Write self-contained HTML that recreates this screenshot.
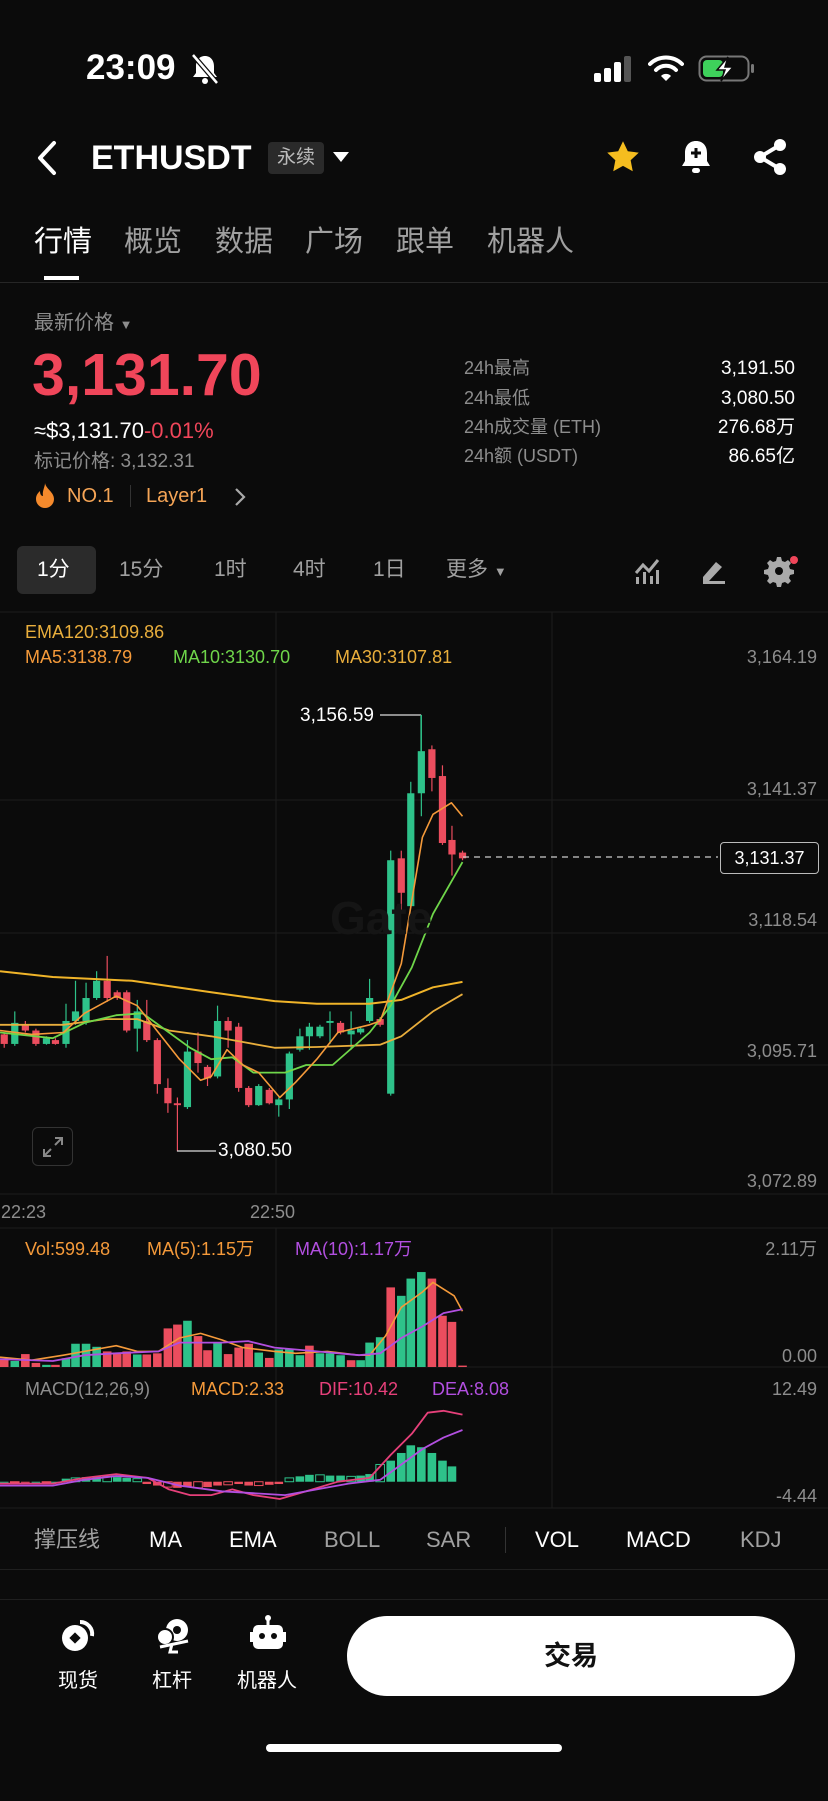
<!DOCTYPE html>
<html><head><meta charset="utf-8">
<style>
*{margin:0;padding:0;box-sizing:border-box}
body{width:828px;height:1801px;background:#0b0b0b;color:#fff;font-family:"Liberation Sans","Noto Sans CJK SC",sans-serif;position:relative;overflow:hidden}
.a{position:absolute;white-space:nowrap;line-height:1}
.g{color:#8d8d8d}
svg{position:absolute;left:0;top:0}
</style></head><body>
<svg id="s" width="828" height="1801" viewBox="0 0 828 1801"></svg>

<!-- status bar -->
<div class="a" style="left:86px;top:50px;font-size:35px;font-weight:bold">23:09</div>
<svg style="left:190px;top:52px" width="30" height="34" viewBox="0 0 30 34"><path d="M15 4c-6 0-9 5-9 10v7l-3 4h24l-3-4v-7c0-5-3-10-9-10z" fill="#fff"/><circle cx="15" cy="29" r="3" fill="#fff"/><path d="M3 3L27 31" stroke="#0b0b0b" stroke-width="5"/><path d="M3 3L27 31" stroke="#fff" stroke-width="2.5"/></svg>
<svg style="left:592px;top:56px" width="44" height="26"><rect x="2" y="17" width="7" height="9" rx="2" fill="#fff"/><rect x="12" y="12" width="7" height="14" rx="2" fill="#fff"/><rect x="22" y="6" width="7" height="20" rx="2" fill="#fff"/><rect x="32" y="0" width="7" height="26" rx="2" fill="#555"/></svg>
<svg style="left:648px;top:54px" width="36" height="28" viewBox="0 0 36 28"><path d="M2 10a23 23 0 0 1 32 0" stroke="#fff" stroke-width="4" fill="none" stroke-linecap="round"/><path d="M8 16a14 14 0 0 1 20 0" stroke="#fff" stroke-width="4" fill="none" stroke-linecap="round"/><path d="M13 22l5 5 5-5a7 7 0 0 0-10 0z" fill="#fff"/></svg>
<svg style="left:698px;top:55px" width="58" height="28"><rect x="1.5" y="1.5" width="49" height="24" rx="7" stroke="#777" stroke-width="2" fill="none"/><rect x="5" y="5" width="20" height="17" rx="4" fill="#3ed15b"/><rect x="53" y="9" width="3" height="9" rx="1.5" fill="#777"/><path d="M30 2L19 15h8l-4 11 12-14h-8z" fill="#fff" stroke="#0b0b0b" stroke-width="1.5"/></svg>

<!-- header -->
<svg style="left:34px;top:140px" width="26" height="36"><path d="M20 3L6 18l14 15" stroke="#fff" stroke-width="4" fill="none" stroke-linecap="round" stroke-linejoin="round"/></svg>
<div class="a" style="left:91px;top:141px;font-size:34px;font-weight:bold">ETHUSDT</div>
<div class="a" style="left:268px;top:142px;width:56px;height:32px;background:#2a2a2a;border-radius:4px;font-size:19px;color:#bbb;text-align:center;line-height:32px">永续</div>
<svg style="left:332px;top:150px" width="18" height="14"><path d="M1 2h16L9 12z" fill="#fff"/></svg>
<svg style="left:604px;top:139px" width="38" height="36" viewBox="0 0 24 24"><path d="M12 1.5l3.2 6.7 7.3.9-5.4 5.1 1.4 7.3L12 17.9l-6.5 3.6 1.4-7.3L1.5 9.1l7.3-.9z" fill="#f5bd1f"/></svg>
<svg style="left:680px;top:138px" width="32" height="40" viewBox="0 0 32 40"><path d="M16 3c-7 0-11 5-11 12v8l-3 5h28l-3-5v-8c0-7-4-12-11-12z" fill="#fff"/><rect x="12" y="30" width="8" height="5" rx="2.5" fill="#fff"/><path d="M16 10v10M11 15h10" stroke="#0b0b0b" stroke-width="3"/></svg>
<svg style="left:752px;top:138px" width="36" height="38" viewBox="0 0 36 38"><circle cx="28" cy="7" r="6" fill="#fff"/><circle cx="8" cy="19" r="6" fill="#fff"/><circle cx="28" cy="31" r="6" fill="#fff"/><path d="M28 7L8 19l20 12" stroke="#fff" stroke-width="4" fill="none"/></svg>

<!-- tabs -->
<div class="a" style="left:34px;top:228px;font-size:29px">行情</div>
<div class="a g" style="left:124px;top:228px;font-size:29px;color:#a0a0a0">概览</div>
<div class="a" style="left:215px;top:228px;font-size:29px;color:#a0a0a0">数据</div>
<div class="a" style="left:305px;top:228px;font-size:29px;color:#a0a0a0">广场</div>
<div class="a" style="left:396px;top:228px;font-size:29px;color:#a0a0a0">跟单</div>
<div class="a" style="left:487px;top:228px;font-size:29px;color:#a0a0a0">机器人</div>
<div class="a" style="left:44px;top:276px;width:35px;height:4px;background:#fff"></div>
<div class="a" style="left:0;top:282px;width:828px;height:1px;background:#262626"></div>

<!-- price area -->
<div class="a g" style="left:34px;top:313px;font-size:20px">最新价格 <span style="font-size:13px">▼</span></div>
<div class="a" style="left:32px;top:346px;font-size:59px;font-weight:bold;color:#f0465a">3,131.70</div>
<div class="a" style="left:34px;top:420px;font-size:22px">≈$3,131.70<span style="color:#f0465a">-0.01%</span></div>
<div class="a g" style="left:34px;top:452px;font-size:19px">标记价格: 3,132.31</div>
<svg style="left:34px;top:482px" width="22" height="26" viewBox="0 0 22 26"><path d="M11 1c1 6 9 9 9 16a9 9 0 0 1-18 0c0-4 2-6 4-8 0 3 1 5 3 5-1-5 2-9 2-13z" fill="#f58a2c"/></svg>
<div class="a" style="left:67px;top:486px;font-size:20px;color:#f6a556">NO.1</div>
<div class="a" style="left:130px;top:485px;width:1px;height:22px;background:#333"></div>
<div class="a" style="left:146px;top:486px;font-size:20px;color:#f6a556">Layer1</div>
<svg style="left:233px;top:487px" width="14" height="20"><path d="M3 2l8 8-8 8" stroke="#aaa" stroke-width="2.2" fill="none"/></svg>

<div class="a g" style="left:464px;top:359px;font-size:18px">24h最高</div>
<div class="a g" style="left:464px;top:389px;font-size:18px">24h最低</div>
<div class="a g" style="left:464px;top:418px;font-size:18px">24h成交量 (ETH)</div>
<div class="a g" style="left:464px;top:447px;font-size:18px">24h额 (USDT)</div>
<div class="a" style="right:33px;top:359px;font-size:19px">3,191.50</div>
<div class="a" style="right:33px;top:389px;font-size:19px">3,080.50</div>
<div class="a" style="right:33px;top:418px;font-size:19px">276.68万</div>
<div class="a" style="right:33px;top:447px;font-size:19px">86.65亿</div>

<!-- timeframe -->
<div class="a" style="left:17px;top:546px;width:79px;height:48px;background:#2b2b2b;border-radius:6px"></div>
<div class="a" style="left:37px;top:559px;font-size:21px">1分</div>
<div class="a" style="left:119px;top:559px;font-size:21px;color:#a0a0a0">15分</div>
<div class="a" style="left:214px;top:559px;font-size:21px;color:#a0a0a0">1时</div>
<div class="a" style="left:293px;top:559px;font-size:21px;color:#a0a0a0">4时</div>
<div class="a" style="left:373px;top:559px;font-size:21px;color:#a0a0a0">1日</div>
<div class="a" style="left:446px;top:559px;font-size:21px;color:#a0a0a0">更多 <span style="font-size:13px">▼</span></div>
<svg style="left:633px;top:557px" width="28" height="28" viewBox="0 0 28 28"><path d="M3 16l7-8 6 6 9-11" stroke="#aaa" stroke-width="3" fill="none"/><rect x="3" y="20" width="3" height="7" fill="#aaa"/><rect x="10" y="15" width="3" height="12" fill="#aaa"/><rect x="17" y="19" width="3" height="8" fill="#aaa"/><rect x="23" y="13" width="3" height="14" fill="#aaa"/></svg>
<svg style="left:699px;top:557px" width="28" height="28" viewBox="0 0 28 28"><path d="M4 20L17 5l6 5-13 14H4z" fill="#aaa"/><rect x="4" y="24" width="22" height="3" fill="#aaa"/></svg>
<svg style="left:764px;top:555px" width="34" height="32" viewBox="0 0 34 32"><path d="M14 3h4l1 4 3 1 3-2 3 3-2 3 1 3 4 1v4l-4 1-1 3 2 3-3 3-3-2-3 1-1 4h-4l-1-4-3-1-3 2-3-3 2-3-1-3-4-1v-4l4-1 1-3-2-3 3-3 3 2 3-1z" fill="#aaa" transform="translate(-1 -1)"/><circle cx="15" cy="16" r="4" fill="#0b0b0b"/><circle cx="30" cy="5" r="4" fill="#f0465a"/></svg>

<!-- chart texts -->
<div class="a" style="left:25px;top:623px;font-size:18px;color:#e9ae3c">EMA120:3109.86</div>
<div class="a" style="left:25px;top:648px;font-size:18px;color:#f59a3a">MA5:3138.79</div>
<div class="a" style="left:173px;top:648px;font-size:18px;color:#6fd64a">MA10:3130.70</div>
<div class="a" style="left:335px;top:648px;font-size:18px;color:#e9ae3c">MA30:3107.81</div>
<div class="a g" style="right:11px;top:648px;font-size:18px">3,164.19</div>
<div class="a g" style="right:11px;top:780px;font-size:18px">3,141.37</div>
<div class="a g" style="right:11px;top:911px;font-size:18px">3,118.54</div>
<div class="a g" style="right:11px;top:1042px;font-size:18px">3,095.71</div>
<div class="a g" style="right:11px;top:1172px;font-size:18px">3,072.89</div>
<div class="a" style="left:720px;top:842px;width:99px;height:32px;border:1px solid #bbb;border-radius:4px;background:#0b0b0b;font-size:18px;text-align:center;line-height:30px">3,131.37</div>
<div class="a" style="left:330px;top:895px;font-size:46px;font-weight:bold;color:#151515">Gate</div>
<div class="a" style="left:300px;top:706px;font-size:19px">3,156.59</div>
<div class="a" style="left:218px;top:1141px;font-size:19px">3,080.50</div>
<div class="a" style="left:32px;top:1127px;width:41px;height:39px;border:1.5px solid #333;border-radius:6px"></div>
<svg style="left:42px;top:1136px" width="22" height="22"><path d="M13 2h7v7M20 2l-7 7M9 20H2v-7M2 20l7-7" stroke="#888" stroke-width="2" fill="none"/></svg>
<div class="a g" style="left:1px;top:1203px;font-size:18px">22:23</div>
<div class="a g" style="left:250px;top:1203px;font-size:18px">22:50</div>

<div class="a" style="left:25px;top:1240px;font-size:18px;color:#f59a3a">Vol:599.48</div>
<div class="a" style="left:147px;top:1240px;font-size:18px;color:#f59a3a">MA(5):1.15万</div>
<div class="a" style="left:295px;top:1240px;font-size:18px;color:#b24fe0">MA(10):1.17万</div>
<div class="a g" style="right:11px;top:1240px;font-size:18px">2.11万</div>
<div class="a g" style="right:11px;top:1347px;font-size:18px">0.00</div>
<div class="a g" style="left:25px;top:1380px;font-size:18px">MACD(12,26,9)</div>
<div class="a" style="left:191px;top:1380px;font-size:18px;color:#f59a3a">MACD:2.33</div>
<div class="a" style="left:319px;top:1380px;font-size:18px;color:#e6407a">DIF:10.42</div>
<div class="a" style="left:432px;top:1380px;font-size:18px;color:#b24fe0">DEA:8.08</div>
<div class="a g" style="right:11px;top:1380px;font-size:18px">12.49</div>
<div class="a g" style="right:11px;top:1487px;font-size:18px">-4.44</div>

<!-- indicator row -->
<div class="a" style="left:34px;top:1529px;font-size:22px;color:#a0a0a0">撑压线</div>
<div class="a" style="left:149px;top:1529px;font-size:22px">MA</div>
<div class="a" style="left:229px;top:1529px;font-size:22px">EMA</div>
<div class="a" style="left:324px;top:1529px;font-size:22px;color:#a0a0a0">BOLL</div>
<div class="a" style="left:426px;top:1529px;font-size:22px;color:#a0a0a0">SAR</div>
<div class="a" style="left:505px;top:1527px;width:1px;height:26px;background:#333"></div>
<div class="a" style="left:535px;top:1529px;font-size:22px">VOL</div>
<div class="a" style="left:626px;top:1529px;font-size:22px">MACD</div>
<div class="a" style="left:740px;top:1529px;font-size:22px;color:#a0a0a0">KDJ</div>
<div class="a" style="left:0;top:1569px;width:828px;height:1px;background:#1f1f1f"></div>
<div class="a" style="left:0;top:1599px;width:828px;height:1px;background:#1f1f1f"></div>

<!-- bottom nav -->
<svg style="left:60px;top:1618px" width="36" height="36" viewBox="0 0 36 36"><circle cx="15" cy="20" r="13" fill="#fff"/><rect x="11" y="16" width="8" height="8" transform="rotate(45 15 20)" fill="#0b0b0b"/><path d="M20 4a12 12 0 0 1 12 14" stroke="#fff" stroke-width="4" fill="none"/></svg>
<div class="a" style="left:58px;top:1671px;font-size:20px">现货</div>
<svg style="left:154px;top:1617px" width="38" height="38" viewBox="0 0 38 38"><circle cx="23" cy="13" r="11" fill="#fff"/><circle cx="23" cy="13" r="4" fill="#0b0b0b"/><circle cx="11" cy="20" r="8" fill="#fff" stroke="#0b0b0b" stroke-width="2"/><path d="M6 30l28-6M18 27l-2 8h8" stroke="#fff" stroke-width="3" fill="none"/></svg>
<div class="a" style="left:152px;top:1671px;font-size:20px">杠杆</div>
<svg style="left:249px;top:1614px" width="38" height="40" viewBox="0 0 38 40"><circle cx="19" cy="4" r="3" fill="#fff"/><rect x="17.5" y="5" width="3" height="6" fill="#fff"/><rect x="4" y="11" width="30" height="24" rx="5" fill="#fff"/><rect x="1" y="18" width="3" height="10" fill="#fff"/><rect x="34" y="18" width="3" height="10" fill="#fff"/><circle cx="13" cy="22" r="3" fill="#0b0b0b"/><circle cx="25" cy="22" r="3" fill="#0b0b0b"/></svg>
<div class="a" style="left:237px;top:1671px;font-size:20px">机器人</div>
<div class="a" style="left:347px;top:1616px;width:448px;height:80px;background:#fff;border-radius:40px;color:#111;font-size:27px;font-weight:bold;text-align:center;line-height:80px">交易</div>
<div class="a" style="left:266px;top:1744px;width:296px;height:8px;background:#fff;border-radius:4px"></div>

<script>
(function(){
var s=document.getElementById('s'),h='';
function L(x1,y1,x2,y2,c,w,d){h+='<line x1="'+x1+'" y1="'+y1+'" x2="'+x2+'" y2="'+y2+'" stroke="'+c+'" stroke-width="'+(w||1)+'"'+(d?' stroke-dasharray="'+d+'"':'')+'/>';}
function R(x,y,w,hh,c,hol){h+='<rect x="'+x+'" y="'+y+'" width="'+w+'" height="'+Math.max(hh,1)+'" '+(hol?'fill="none" stroke="'+c+'" stroke-width="1"':'fill="'+c+'"')+'/>';}
function P(pts,c,w,fx,fy){h+='<polyline fill="none" stroke="'+c+'" stroke-width="'+w+'" stroke-linejoin="round" points="'+pts.map(function(p){return fx(p[0]).toFixed(1)+','+fy(p[1]).toFixed(1)}).join(' ')+'"/>';}
var X=function(x){return x*0.528},Y2=function(y){return 600+y*0.3827},Y3=function(y){return 1200+y*0.3833};
var G='#2ec28a',Rd='#eb4d5e',grid='#1d1d1d';
L(0,612,828,612,grid);L(0,800,828,800,grid);L(0,933,828,933,grid);L(0,1065,828,1065,grid);L(0,1194,828,1194,grid);
L(276,612,276,1194,grid);L(552,612,552,1194,grid);
L(0,1228,828,1228,grid);L(0,1367,828,1367,grid);L(0,1508,828,1508,grid);
L(276,1228,276,1508,grid);L(552,1228,552,1508,grid);
var C=[[8,1135,1160,1130,1170,'r'],[28,1105,1160,1075,1165,'g'],[48,1108,1125,1100,1130,'r'],[68,1125,1160,1120,1165,'r'],[88,1145,1160,1140,1162,'g'],[105,1150,1160,1145,1162,'r'],[125,1100,1160,1055,1170,'g'],[143,1075,1100,995,1110,'g'],[163,1040,1100,1000,1110,'g'],[183,995,1040,970,1045,'g'],[203,995,1040,930,1050,'r'],[222,1025,1040,1020,1045,'r'],[240,1025,1125,1020,1130,'r'],[260,1075,1120,1045,1180,'g'],[278,1100,1150,1045,1155,'r'],[298,1150,1265,1145,1290,'r'],[318,1275,1315,1250,1340,'r'],[336,1315,1320,1300,1440,'r'],[355,1180,1325,1150,1330,'g'],[375,1180,1210,1130,1235,'r'],[393,1220,1250,1215,1270,'r'],[412,1100,1245,1060,1250,'g'],[432,1100,1125,1090,1170,'r'],[452,1115,1275,1105,1285,'r'],[471,1275,1320,1270,1325,'r'],[490,1270,1320,1265,1322,'g'],[510,1280,1315,1275,1318,'r'],[528,1305,1320,1300,1350,'g'],[548,1185,1305,1180,1330,'g'],[568,1140,1175,1120,1180,'g'],[586,1115,1140,1105,1175,'g'],[606,1115,1140,1110,1145,'g'],[625,1100,1105,1075,1160,'g'],[645,1105,1130,1100,1135,'r'],[665,1125,1135,1075,1175,'g'],[683,1120,1130,1115,1135,'g'],[700,1040,1100,990,1105,'g'],[720,1095,1110,1090,1115,'r'],[740,680,1290,655,1295,'g'],[760,675,765,655,810,'r'],[778,505,800,475,805,'g'],[798,395,505,300,565,'g'],[818,390,465,380,500,'r'],[838,460,635,432,640,'r'],[856,627,665,590,720,'r'],[876,660,675,655,680,'r']];
C.forEach(function(c){var x=X(c[0]),col=c[5]=='g'?G:Rd;L(x,Y2(c[3]),x,Y2(c[4]),col,1.2);R(x-3.6,Y2(c[1]),7.2,Y2(c[2])-Y2(c[1]),col);});
L(380,715,421,715,'#ddd',1.2);L(421,715,421,Y2(395),G,1.2);
L(177,Y2(1440),177,1151,'#ddd',1.2);L(177,1151,216,1151,'#ddd',1.2);
L(463,857,718,857,'#ccc',1.3,'6 5');
P([[0,970],[100,985],[250,995],[400,1025],[520,1048],[600,1055],[700,1055],[760,1045],[820,1012],[876,998]],'#f0b429',2,X,Y2);
P([[0,1110],[120,1110],[200,1095],[260,1095],[320,1125],[400,1140],[460,1155],[520,1170],[600,1168],[720,1162],[760,1140],[820,1075],[876,1030]],'#e9ae3c',1.8,X,Y2);
P([[0,1130],[100,1145],[160,1105],[220,1085],[270,1080],[320,1130],[360,1170],[400,1200],[440,1195],[480,1235],[540,1235],[580,1215],[630,1215],[700,1130],[740,1060],[780,960],[820,820],[876,685]],'#6fd64a',1.8,X,Y2);
P([[0,1125],[60,1135],[120,1130],[160,1080],[220,1035],[260,1060],[300,1130],[340,1200],[380,1255],[400,1245],[430,1175],[460,1215],[490,1235],[530,1300],[560,1260],[600,1200],[640,1130],[700,1110],[720,1100],[760,950],[800,620],[820,560],[855,530],[876,565]],'#f59a3a',1.6,X,Y2);
var V=[415,420,402,425,430,430,413,375,375,383,395,398,395,403,403,400,335,325,315,355,392,372,402,385,375,398,412,390,390,405,380,400,400,405,418,418,372,358,228,250,205,188,205,302,318,432];
var VX=[8,28,48,68,88,105,125,143,163,183,203,222,240,260,278,298,318,336,355,375,393,412,432,452,471,490,510,528,548,568,586,606,625,645,665,683,700,720,740,760,778,798,818,838,856,876];
var vcol='rgrrgrgggg'+'rrrgrrrrgrr'+'grrrgrgggrgggrgg'+'grggg'+'rrrr';
VX.forEach(function(x,i){var col=(vcol[i]=='g')?G:Rd;var t=Y3(V[i]);R(X(x)-4.3,t,8.6,1367-t,col);});
P([[0,410],[60,418],[120,405],[160,395],[220,380],[260,395],[300,395],[340,360],[380,348],[420,365],[460,385],[520,395],[560,400],[620,395],[680,405],[700,405],[730,355],[760,280],[800,240],[820,215],[860,250],[876,290]],'#f59a3a',1.6,X,Y3);
P([[0,415],[100,420],[160,405],[220,400],[300,395],[340,372],[420,372],[470,368],[520,385],[600,395],[680,405],[720,400],[760,360],[800,330],[840,295],[876,285]],'#b24fe0',1.8,X,Y3);
var Z=735,MH=[0,-2,-2,0,-2,0,8,10,12,14,14,12,10,8,-6,-10,-14,-16,-14,-16,-14,-10,-8,-6,-10,-10,-8,-6,10,14,18,18,16,16,14,16,20,45,55,75,95,90,75,55,40];
VX.forEach(function(x,i){if(i>=MH.length)return;var v=MH[i];var col=v>=0?G:Rd;var hol=(i%3==1)&&i<40;if(v>=0)R(X(x)-4.3,Y3(Z-v),8.6,Y3(Z)-Y3(Z-v),col,hol);else R(X(x)-4.3,Y3(Z),8.6,Y3(Z-v)-Y3(Z),col,hol);});
P([[0,740],[100,740],[160,725],[220,715],[280,725],[320,755],[360,770],[400,770],[440,755],[480,770],[530,780],[580,760],[640,735],[700,725],[740,665],[780,610],[810,555],[840,550],[876,560]],'#e6407a',1.8,X,Y3);
P([[0,745],[100,745],[160,730],[220,720],[280,725],[340,745],[420,760],[480,765],[540,770],[600,755],[660,740],[720,730],[760,690],[800,650],[840,620],[876,600]],'#b24fe0',1.8,X,Y3);
s.innerHTML=h;
})();
</script>
</body></html>
